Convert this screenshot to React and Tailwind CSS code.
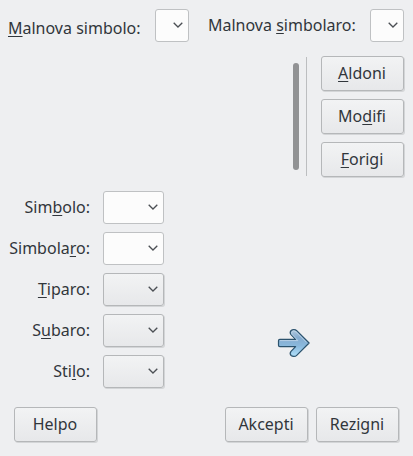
import React from "react";

// Label text with its keyboard accelerator marked by "_".
function Mnemonic({ text }) {
  const i = text.indexOf("_");
  if (i < 0) return <span>{text}</span>;
  return (
    <span className="whitespace-nowrap">
      {text.slice(0, i)}
      <span className="underline decoration-1 underline-offset-2 [text-decoration-skip-ink:none]">
        {text[i + 1]}
      </span>
      {text.slice(i + 2)}
    </span>
  );
}

function Button({ text }) {
  return (
    <button
      type="button"
      className="flex h-[35px] w-[83px] shrink-0 items-start justify-center rounded-[3px] border border-[#b5b7b9] bg-linear-to-b from-[#f2f3f4] to-[#e7e8ea] pr-px pt-[5px] shadow-[1px_1px_0_#d3d5d7]"
    >
      <Mnemonic text={text} />
    </button>
  );
}

function Combo({ size, editable }) {
  return (
    <div
      className={
        "flex h-[33px] shrink-0 items-start justify-end rounded-[3px] border pr-[5px] pt-3 " +
        (size === "small" ? "w-[34px] " : "w-[61px] ") +
        (editable
          ? "border-[#bfc1c3] bg-[#fcfcfc]"
          : "border-[#b5b7b9] bg-linear-to-b from-[#f2f3f4] to-[#e7e8ea] shadow-[1px_1px_0_#d3d5d7]")
      }
    >
      <svg width="10" height="7" viewBox="0 0 10 7" fill="none" stroke="#4b4f54" strokeWidth="1.3">
        <path d="M0.7 0.7L5 5L9.3 0.7" />
      </svg>
    </div>
  );
}

const fields = [
  { label: "Sim_bolo:", editable: true },
  { label: "Simbola_ro:", editable: true },
  { label: "_Tiparo:" },
  { label: "S_ubaro:" },
  { label: "Sti_lo:" },
];

export default function App() {
  return (
    <div className="flex h-[456px] w-[413px] flex-col overflow-hidden bg-[#eeeff1] pt-[9px] font-['Noto_Sans',sans-serif] text-[16px] leading-[22px] text-[#31363b]">
      <div className="flex h-[33px] items-start justify-between pl-2 pr-[9px]">
        <div className="flex w-[181px] items-start justify-between">
          <div className="pt-2">
            <Mnemonic text="_Malnova simbolo:" />
          </div>
          <Combo size="small" editable />
        </div>
        <div className="flex w-[196px] items-start justify-between">
          <div className="pt-[5px]">
            <Mnemonic text="Malnova _simbolaro:" />
          </div>
          <Combo size="small" editable />
        </div>
      </div>

      <div className="mt-[14px] flex h-[121px] justify-end pr-[9px]">
        <div className="mt-[7px] h-[107px] w-[6px] rounded-full bg-[#919294]" />
        <div className="ml-[7px] mt-px h-[119px] w-px bg-[#bcbec0]" />
        <div className="ml-[14px] flex flex-col gap-2">
          <Button text="_Aldoni" />
          <Button text="Mo_difi" />
          <Button text="_Forigi" />
        </div>
      </div>

      <div className="mt-[14px] flex h-[197px]">
        <div className="flex w-[164px] flex-col gap-2">
          {fields.map((f) => (
            <div key={f.label} className="flex items-start justify-between">
              <div className="w-[90px] pt-[5px] text-right">
                <Mnemonic text={f.label} />
              </div>
              <Combo editable={f.editable} />
            </div>
          ))}
        </div>
        <div className="ml-[113px] mt-[137px]">
          <svg width="34" height="30" viewBox="0 0 34 30">
            <defs>
              <linearGradient id="arrow" x1="0" y1="0" x2="0" y2="1">
                <stop offset="0" stopColor="#b4cade" />
                <stop offset="0.3" stopColor="#84abcf" />
                <stop offset="0.6" stopColor="#8ab8dc" />
                <stop offset="1" stopColor="#b0e0fa" />
              </linearGradient>
            </defs>
            <path
              d="M2.8 11.4H18.6L14 6.6C13.2 5.6 13.1 3.6 14.1 2.5C15.5 1.2 18.3 1.2 19.7 2.6L32.1 15L19.7 27.4C18.3 28.8 15.5 28.8 14.1 27.5C13.1 26.4 13.2 24.4 14 23.4L18.6 18.6H2.8Q1.5 18.6 1.5 17.3V12.7Q1.5 11.4 2.8 11.4Z"
              fill="url(#arrow)"
              stroke="#2b526d"
              strokeWidth="1.2"
              strokeLinejoin="round"
            />
            <path d="M2.8 12.6H20.8L15 6.3C14.1 5 15 2.9 16.9 2.8L19 3.8L29.5 14.3" fill="none" stroke="#c3d8ea" strokeWidth="0.8" />
          </svg>
        </div>
      </div>

      <div className="mt-[19px] flex pl-[14px] pr-[14px]">
        <Button text="Helpo" />
        <div className="ml-auto flex gap-2">
          <Button text="Akcepti" />
          <Button text="Rezigni" />
        </div>
      </div>
    </div>
  );
}
